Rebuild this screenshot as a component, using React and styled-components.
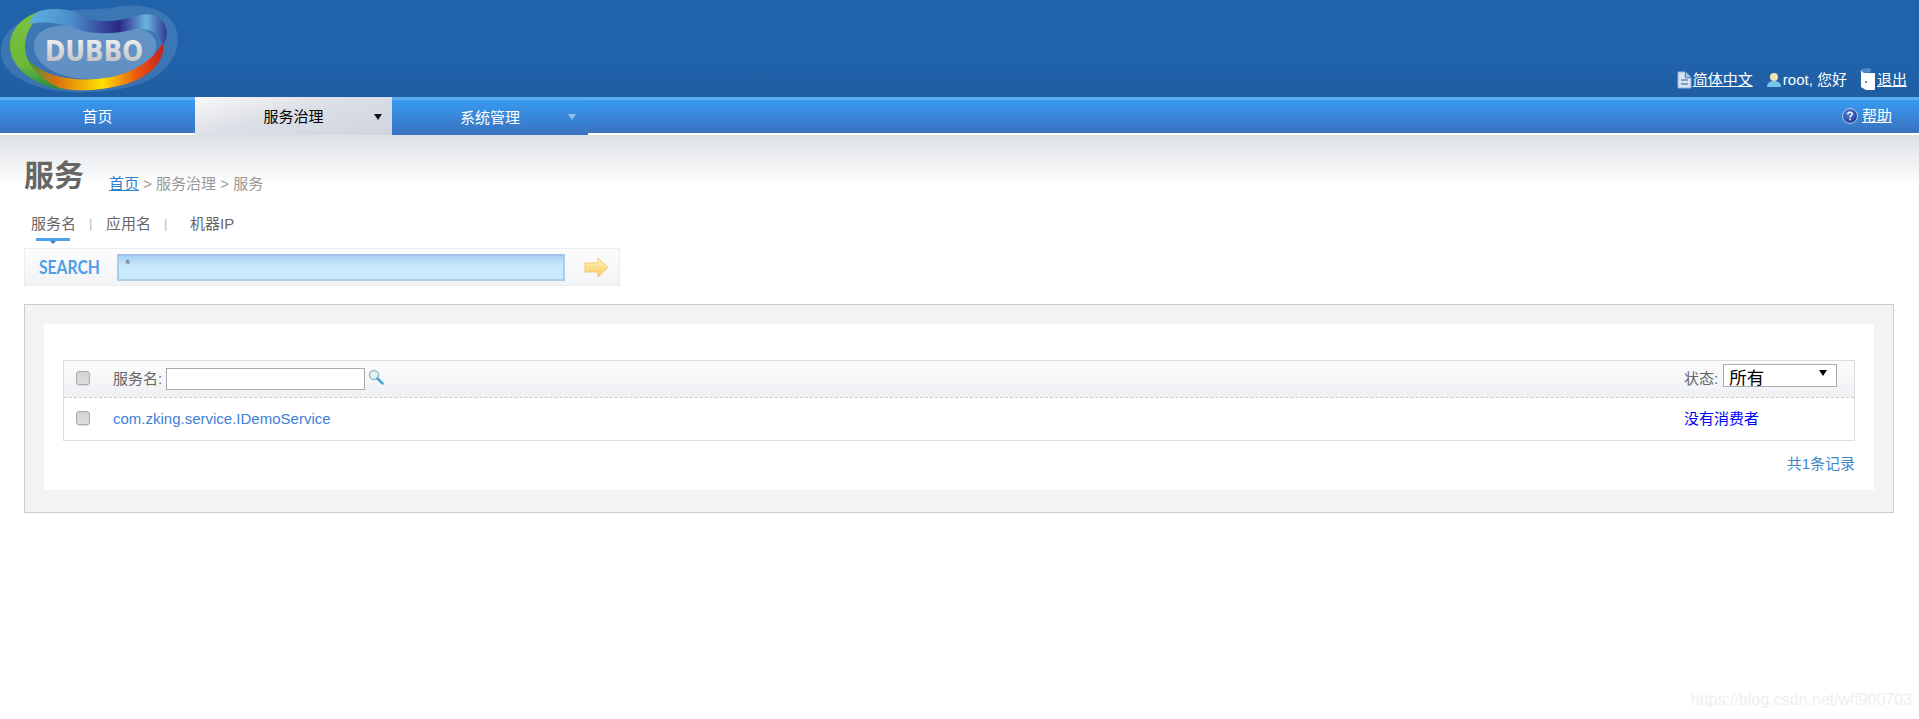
import React from "react";
import styled, { createGlobalStyle } from "styled-components";

const Global = createGlobalStyle`
  html, body { margin: 0; padding: 0; background: #fff; }
  body { font: 15px/20px "Liberation Sans", "Noto Sans CJK SC", sans-serif; color: #666; }
  * { box-sizing: border-box; }
  a { color: inherit; }
`;

const Page = styled.div`
  position: relative;
  height: 719px;
  overflow: hidden;
`;

const Header = styled.header`
  height: 97px;
  display: flex;
  align-items: flex-end;
  justify-content: space-between;
  background: linear-gradient(#2063ab 0%, #2063ab 60%, #1f5da3 100%);
`;

const UserBar = styled.div`
  display: flex;
  align-items: center;
  padding: 0 12px 6px 0;
  color: #fff;
`;

const UserItem = styled.span`
  display: flex;
  align-items: center;
  gap: 1px;
  margin-left: 13px;
`;

const Nav = styled.nav`
  height: 38px;
  display: flex;
  border-bottom: 2px solid #fff;
  background:
    linear-gradient(#5caaf0 0, #5caaf0 3px, #379af0 3px, #3a72c0 100%);
`;

const NavTab = styled.div`
  position: relative;
  width: ${(p) => p.$w}px;
  height: 38px;
  display: flex;
  align-items: center;
  justify-content: center;
  padding-top: ${(p) => p.$pt || 2}px;
  color: ${(p) => (p.$active ? "#000" : "#fff")};
  background: ${(p) =>
    p.$active
      ? "linear-gradient(165deg, #f8f8f9 0%, #dcdfe6 45%, #cfd4df 100%)"
      : p.$solid
      ? "linear-gradient(#5caaf0 0, #5caaf0 3px, #379af0 3px, #3a72c0 100%)"
      : "transparent"};
  &::after {
    content: "";
    display: ${(p) => (p.$caret ? "block" : "none")};
    position: absolute;
    right: ${(p) => p.$cr}px;
    top: 17px;
    border: 4px solid transparent;
    border-top: 6px solid ${(p) => p.$caret};
    border-bottom: 0;
  }
`;

const NavHelp = styled.div`
  margin-left: auto;
  display: flex;
  align-items: center;
  gap: 4px;
  padding: 2px 27px 0 0;
  color: #fff;
`;

const Content = styled.main`
  padding: 0 25px 0 24px;
  background: linear-gradient(#dde0e5, #ffffff) no-repeat 0 0 / 100% 50px;
`;

const TitleRow = styled.div`
  display: flex;
  align-items: flex-end;
  height: 61px;
`;

const Title = styled.h1`
  margin: 0 26px 0 0;
  font-size: 30px;
  line-height: 40px;
  font-weight: bold;
  color: #666;
  width: 59px;
  white-space: nowrap;
`;

const Crumbs = styled.div`
  color: #999;
  line-height: 20px;
  padding-bottom: 2px;
  a {
    color: #2f7fd0;
  }
`;

const Tabs = styled.div`
  display: flex;
  align-items: center;
  height: 22px;
  margin-top: 17px;
  padding-left: 7px;
`;

const Tab = styled.span`
  position: relative;
  width: ${(p) => p.$w}px;
  white-space: nowrap;
  color: #666;
`;

const TabMark = styled.i`
  position: absolute;
  left: 5px;
  top: 24px;
  width: 34px;
  height: 3px;
  background: #4ea1e8;
  &::after {
    content: "";
    position: absolute;
    left: 14px;
    top: 3px;
    border: 3px solid transparent;
    border-top: 3px solid #3b7fbd;
    border-bottom: 0;
  }
`;

const Sep = styled.span`
  width: ${(p) => p.$w}px;
  color: #bbb;
  font-size: 13px;
`;

const SearchBar = styled.div`
  width: 596px;
  height: 38px;
  margin-top: 13px;
  display: flex;
  align-items: center;
  border: 1px solid #e9edf1;
  background: linear-gradient(#fdfdfd, #f1f3f5);
`;

const SearchCell = styled.span`
  width: 92px;
  padding-left: 14px;
`;

const SearchLabel = styled.span`
  display: inline-block;
  font: bold 16px "Lato", sans-serif;
  color: #4e9ee8;
  transform: scale(0.98, 1.15);
  transform-origin: 0 50%;
`;

const SearchInput = styled.input`
  width: 448px;
  height: 27px;
  padding: 0 0 7px 6px;
  border: 2px solid #a9cdea;
  border-top-color: #9fc2e6;
  outline: 0;
  color: #777;
  font: 14px "Liberation Sans", sans-serif;
  background: linear-gradient(#a9cff2, #c9e9fd 45%);
`;

const ArrowBtn = styled.span`
  display: flex;
  margin-left: 19px;
`;

const Panel = styled.section`
  margin-top: 18px;
  height: 209px;
  padding: 19px;
  border: 1px solid #ccc;
  background: #f2f4f4;
`;

const Inner = styled.div`
  height: 166px;
  padding: 36px 19px 0;
  background: #fff;
`;

const Table = styled.div`
  border: 1px solid #ddd;
`;

const Row = styled.div`
  display: flex;
  align-items: center;
  height: ${(p) => p.$h}px;
  ${(p) =>
    p.$head
      ? "background: linear-gradient(#fcfcfd, #eef0f3); border-bottom: 1px dashed #ccc;"
      : ""}
`;

const CheckCell = styled.span`
  width: 49px;
  padding-left: 12px;
  margin-top: -2px;
  display: flex;
`;

const Check = styled.span`
  width: 14px;
  height: 14px;
  border: 1px solid #aaa;
  border-radius: 3px;
  background: linear-gradient(#d2d2d2, #e0e0e0);
  box-shadow: 0 1px 0 #ddd;
`;

const NameCell = styled.div`
  flex: 1;
  display: flex;
  align-items: center;
  gap: 3px;
  color: #666;
`;

const FilterInput = styled.input`
  width: 199px;
  height: 22px;
  margin-left: 1px;
  border: 1px solid #aaa;
  outline: 0;
  background: #fff;
`;

const LensWrap = styled.span`
  display: flex;
  margin-top: -4px;
`;

const ServiceLink = styled.a`
  color: #4080d8;
  text-decoration: none;
`;

const StatusCell = styled.div`
  width: 170px;
  display: flex;
  align-items: center;
  gap: 3px;
  color: #666;
`;

const NoConsumer = styled.a`
  color: #0000ff;
`;

const SelectWrap = styled.span`
  position: relative;
  display: block;
  margin: -8px 0 0 2px;
  &::after {
    content: "";
    position: absolute;
    right: 10px;
    top: 6px;
    border: 4px solid transparent;
    border-top: 6px solid #000;
    border-bottom: 0;
  }
`;

const StatusSelect = styled.select`
  appearance: none;
  display: block;
  width: 114px;
  height: 23px;
  padding: 3px 0 0 5px;
  border: 1px solid #aaa;
  border-radius: 0;
  background: #fff;
  color: #000;
  font: 17.5px/20px "Liberation Sans", "Noto Sans CJK SC", sans-serif;
  outline: 0;
`;

const Total = styled.div`
  margin-top: 13px;
  text-align: right;
  color: #3a86c8;
`;

const Watermark = styled.div`
  position: absolute;
  right: 7px;
  bottom: 9px;
  font-size: 16px;
  color: #efefef;
`;

function Logo() {
  return (
    <svg width="182" height="97" viewBox="0 0 182 97">
      <defs>
        <linearGradient id="rainbow" x1="0" x2="1" y1="0" y2="0">
          <stop offset="0" stopColor="#3d9a3c" />
          <stop offset="0.2" stopColor="#d9700f" />
          <stop offset="0.55" stopColor="#ffe000" />
          <stop offset="0.8" stopColor="#e8590f" />
          <stop offset="1" stopColor="#c9201c" />
        </linearGradient>
        <linearGradient id="ribbon" x1="0" x2="1" y1="0" y2="0">
          <stop offset="0" stopColor="#5ab0e0" />
          <stop offset="0.3" stopColor="#4d8ecb" />
          <stop offset="0.65" stopColor="#2b2684" />
          <stop offset="0.85" stopColor="#6bb4e2" />
          <stop offset="1" stopColor="#2f3b93" />
        </linearGradient>
        <linearGradient id="green" x1="0" x2="0" y1="0" y2="1">
          <stop offset="0" stopColor="#7cc23e" />
          <stop offset="0.7" stopColor="#6db83a" />
          <stop offset="1" stopColor="#1f8a48" />
        </linearGradient>
        <linearGradient id="word" x1="0" x2="0" y1="0" y2="1">
          <stop offset="0" stopColor="#f6f6f6" />
          <stop offset="1" stopColor="#b8b8b8" />
        </linearGradient>
      </defs>
      <path d="M1 50C2 30 22 18 44 14C70 8 95 10 112 8C135 2 165 6 175 26C184 46 172 72 140 84C110 94 60 96 30 84C12 76 0 66 1 50Z" fill="#fff" opacity="0.12" />
      <path d="M34 46C34 26 62 22 90 27C115 31 150 20 156 42C160 62 130 78 90 79C60 79 34 66 34 46Z" fill="#fff" opacity="0.2" />
      <path d="M50 9C25 13 9 28 10 48C11 68 36 87 64 90C46 81 34 72 28 60C21 45 26 22 50 9Z" fill="url(#green)" />
      <path d="M28 60C44 76 70 81 96 79C124 77 150 66 163 42C166 60 152 76 126 84C100 91 76 92 60 88C44 82 34 72 28 60Z" fill="url(#rainbow)" />
      <path d="M40 11C54 7 72 9 86 17C100 24 120 21 136 16C152 11 163 17 166 28C168 34 166 40 163 46C161 34 150 28 136 29C116 34 96 35 80 30C66 25 52 20 30 24C30 18 34 14 40 11Z" fill="url(#ribbon)" />
      <text x="45" y="61" fontFamily="'DejaVu Sans', sans-serif" fontWeight="bold" fontSize="28" fill="url(#word)" textLength="98" lengthAdjust="spacingAndGlyphs">
        DUBBO
      </text>
    </svg>
  );
}

function DocIcon() {
  return (
    <svg width="15" height="18" viewBox="0 0 15 18">
      <path d="M1 1H8L8 7H14V17H1Z" fill="#d8e4f2" stroke="#8fb0d8" />
      <path d="M9 1L14 6H9Z" fill="#a8c3e2" />
      <path d="M4 9H11M4 13H11" stroke="#5d87bb" strokeWidth="1.5" />
    </svg>
  );
}

function UserIcon() {
  return (
    <svg width="16" height="18" viewBox="0 0 16 18">
      <circle cx="8" cy="6" r="4" fill="#f3e3b0" />
      <path d="M1 16C1 11 5 10 8 10C11 10 15 11 15 16Z" fill="#79c0ea" />
    </svg>
  );
}

function DoorIcon() {
  return (
    <svg width="16" height="23" viewBox="0 0 16 23">
      <path d="M1 2L6 1H10V4H1Z" fill="#4a83c4" stroke="#5c95d2" />
      <path d="M1 3V19L6 22H14C15 22 15 21 15 20V6C15 5 15 5 14 5H4Z" fill="#fff" />
      <rect x="5" y="13" width="2" height="2" fill="#5b8ec8" />
    </svg>
  );
}

function HelpIcon() {
  return (
    <svg width="16" height="16" viewBox="0 0 16 16">
      <defs>
        <radialGradient id="help" cx="0.4" cy="0.35" r="0.7">
          <stop offset="0" stopColor="#5a7fd8" />
          <stop offset="1" stopColor="#1f3a9a" />
        </radialGradient>
      </defs>
      <circle cx="8" cy="8" r="7.5" fill="url(#help)" stroke="#b8cbe8" />
      <path d="M5.7 6.2C5.8 4.8 6.8 4.2 8 4.2C9.4 4.2 10.3 5 10.3 6.1C10.3 7.6 8 7.6 8 9.4" fill="none" stroke="#fff" strokeWidth="1.4" />
      <rect x="7.3" y="10.6" width="1.5" height="1.5" fill="#fff" />
    </svg>
  );
}

function ArrowIcon() {
  return (
    <svg width="25" height="21" viewBox="0 0 25 21">
      <defs>
        <linearGradient id="gold" x1="0" x2="0" y1="0" y2="1">
          <stop offset="0" stopColor="#fff4b8" />
          <stop offset="1" stopColor="#fbc95e" />
        </linearGradient>
      </defs>
      <path d="M1 6H14V1L24 10.5L14 20V15H1Z" fill="url(#gold)" stroke="#f0c878" />
    </svg>
  );
}

function LensIcon() {
  return (
    <svg width="16" height="16" viewBox="0 0 16 16">
      <circle cx="6" cy="6" r="4.5" fill="#e6f2f6" stroke="#9dbcc0" strokeWidth="1.5" />
      <path d="M9.5 9.5L14.5 14.5" stroke="#4ea5dc" strokeWidth="2.5" strokeLinecap="round" />
    </svg>
  );
}

export default function App() {
  return (
    <Page>
      <Global />
      <Header>
        <Logo />
        <UserBar>
          <UserItem>
            <DocIcon />
            <a href="#zh">简体中文</a>
          </UserItem>
          <UserItem>
            <UserIcon />
            root, 您好
          </UserItem>
          <UserItem>
            <DoorIcon />
            <a href="#out">退出</a>
          </UserItem>
        </UserBar>
      </Header>
      <Nav>
        <NavTab $w={195}>首页</NavTab>
        <NavTab $w={197} $active $caret="#111" $cr={10}>服务治理</NavTab>
        <NavTab $w={196} $pt={4} $solid $caret="#8fbdec" $cr={12}>系统管理</NavTab>
        <NavHelp>
          <HelpIcon />
          <a href="#help">帮助</a>
        </NavHelp>
      </Nav>
      <Content>
        <TitleRow>
          <Title>服务</Title>
          <Crumbs>
            <a href="#home">首页</a> &gt; 服务治理 &gt; 服务
          </Crumbs>
        </TitleRow>
        <Tabs>
          <Tab $w={58}>
            服务名
            <TabMark />
          </Tab>
          <Sep $w={17}>|</Sep>
          <Tab $w={58}>应用名</Tab>
          <Sep $w={26}>|</Sep>
          <Tab>机器IP</Tab>
        </Tabs>
        <SearchBar>
          <SearchCell>
            <SearchLabel>SEARCH</SearchLabel>
          </SearchCell>
          <SearchInput defaultValue="*" />
          <ArrowBtn>
            <ArrowIcon />
          </ArrowBtn>
        </SearchBar>
        <Panel>
          <Inner>
            <Table>
              <Row $head $h={37}>
                <CheckCell>
                  <Check />
                </CheckCell>
                <NameCell>
                  服务名:
                  <FilterInput />
                  <LensWrap>
                    <LensIcon />
                  </LensWrap>
                </NameCell>
                <StatusCell>
                  状态:
                  <SelectWrap>
                    <StatusSelect defaultValue="all">
                      <option value="all">所有</option>
                    </StatusSelect>
                  </SelectWrap>
                </StatusCell>
              </Row>
              <Row $h={42}>
                <CheckCell>
                  <Check />
                </CheckCell>
                <NameCell>
                  <ServiceLink href="#svc">com.zking.service.IDemoService</ServiceLink>
                </NameCell>
                <StatusCell>
                  <NoConsumer>没有消费者</NoConsumer>
                </StatusCell>
              </Row>
            </Table>
            <Total>共1条记录</Total>
          </Inner>
        </Panel>
      </Content>
      <Watermark>https://blog.csdn.net/wff900703</Watermark>
    </Page>
  );
}
